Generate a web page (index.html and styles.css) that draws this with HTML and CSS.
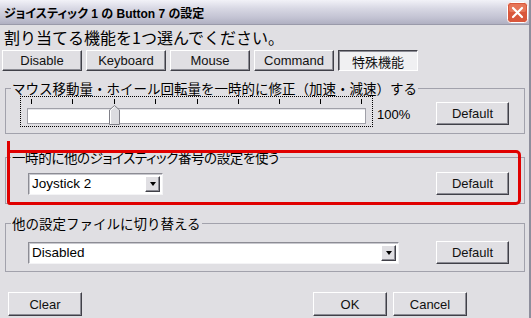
FILE: index.html
```html
<!DOCTYPE html>
<html lang="ja">
<head>
  <meta charset="UTF-8" />
  <title>ジョイスティック 1 の Button 7 の設定</title>
  <link rel="stylesheet" href="styles.css">
</head>
<body>
  <div class="window">
    <div class="titlebar">
      <span class="title">ジョイスティック 1 の Button 7 の設定</span>
      <span class="close">
        <svg viewBox="0 0 21 21" width="21" height="21">
          <rect x="0.5" y="0.5" width="20" height="20" rx="3" fill="#d9573c" stroke="#fff" />
          <rect x="2" y="2" width="17" height="8" rx="2" fill="#ee8a6e" opacity="0.6" />
          <path d="M6 6l9 9M15 6l-9 9" stroke="#fff" stroke-width="2.2" stroke-linecap="round" />
        </svg>
      </span>
    </div>
    <div class="content">
      <div class="heading">割り当てる機能を1つ選んでください。</div>
      <div class="tabs">
        <button class="btn tab">Disable</button>
        <button class="btn tab">Keyboard</button>
        <button class="btn tab">Mouse</button>
        <button class="btn tab">Command</button>
        <button class="btn tab pressed">特殊機能</button>
      </div>

      <fieldset class="group g-speed">
        <legend>マウス移動量・ホイール回転量を一時的に修正（加速・減速）する</legend>
        <div class="row">
          <div class="slider">
            <svg viewBox="0 0 351 29" width="351" height="29">
              <g stroke="#000" stroke-width="1">
                <line x1="10.5" y1="2" x2="10.5" y2="7" />
                <line x1="51.5" y1="2" x2="51.5" y2="7" />
                <line x1="93.5" y1="2" x2="93.5" y2="7" />
                <line x1="134.5" y1="2" x2="134.5" y2="7" />
                <line x1="176.5" y1="2" x2="176.5" y2="7" />
                <line x1="217.5" y1="2" x2="217.5" y2="7" />
                <line x1="258.5" y1="2" x2="258.5" y2="7" />
                <line x1="299.5" y1="2" x2="299.5" y2="7" />
                <line x1="340.5" y1="2" x2="340.5" y2="7" />
              </g>
              <rect x="6.5" y="11.5" width="338" height="15" fill="#fff" stroke="#a0a0a8" />
              <line x1="7" y1="12.5" x2="344" y2="12.5" stroke="#e4e4e8" />
              <polygon points="88.5,27.5 88.5,13 93.5,8.5 98.5,13 98.5,27.5" fill="#dcdce0" stroke="#808088" />
              <polyline points="89.5,27 89.5,13.4 93.5,9.8" fill="none" stroke="#fff" />
            </svg>
          </div>
          <span class="pct">100%</span>
          <button class="btn default">Default</button>
        </div>
      </fieldset>

      <div class="mark-wrap">
        <fieldset class="group g-joy">
          <legend>一時的に他のジョイスティック番号の設定を使う</legend>
          <div class="row">
            <div class="combo short">
              <span class="combo-text">Joystick 2</span>
              <span class="combo-arrow"><span class="tri"></span></span>
            </div>
            <button class="btn default">Default</button>
          </div>
        </fieldset>
        <div class="mark"></div>
      </div>

      <fieldset class="group g-file">
        <legend>他の設定ファイルに切り替える</legend>
        <div class="row">
          <div class="combo long">
            <span class="combo-text">Disabled</span>
            <span class="combo-arrow"><span class="tri"></span></span>
          </div>
          <button class="btn default">Default</button>
        </div>
      </fieldset>

      <div class="footer">
        <button class="btn foot">Clear</button>
        <button class="btn foot ok">OK</button>
        <button class="btn foot">Cancel</button>
      </div>
    </div>
  </div>
</body>
</html>
```

FILE: styles.css
```css
body {
  margin: 0;
  background-color: #e0dfe3;
  color: #000;
  font-family: "Liberation Sans", "Noto Sans CJK JP", sans-serif;
  font-size: 13px;
}
.window {
  width: 529px;
  height: 318px;
  border-right: 2px solid #8e8e9c;
  overflow: hidden;
}

/* title bar */
.titlebar {
  height: 24px;
  display: flex;
  align-items: center;
  justify-content: space-between;
  padding: 0 1px 0 4px;
  background: linear-gradient(#f2f2f8, #d8d8e4 35%, #c2c2d2 75%, #b0b0c2);
  border-bottom: 1px solid #9a9aaa;
}
.title {
  font-weight: bold;
  font-size: 12px;
  font-feature-settings: "palt";
}
.close {
  display: flex;
  width: 21px;
  height: 21px;
}

.content {
  padding: 0 4px 0 5px;
}
.heading {
  height: 24px;
  line-height: 24px;
  margin-left: -1px;
  font-size: 16px;
  font-family: "Noto Sans CJK JP", sans-serif;
}

/* classic 3d buttons */
.btn {
  background-color: #e0dfe3;
  border: 1px solid;
  border-color: #fff #404048 #404048 #fff;
  box-shadow: inset -1px -1px 0 #8c8c94;
  font-family: "Liberation Sans", "Noto Sans CJK JP", sans-serif;
  font-size: 13px;
  font-weight: normal;
  color: #111;
  padding: 0;
  margin: 0;
}
.tabs {
  display: flex;
  gap: 4px;
  margin-left: -3px;
  margin-top: 1px;
}
.tab {
  width: 80px;
  height: 21px;
}
.tab.pressed {
  border-color: #404048 #fff #fff #404048;
  box-shadow: inset 1px 1px 0 #8c8c94;
  background-color: #f0f0f2;
  padding-top: 1px;
}

/* groups */
.group {
  margin: 0;
  padding: 0 14px;
  border: 1px solid #a2a2ac;
  min-inline-size: 0;
}
.group legend {
  margin-left: -9px;
  padding: 0 1px;
  line-height: 14px;
  font-size: 13.5px;
  font-family: "Noto Sans CJK JP", sans-serif;
}
.g-joy legend {
  font-feature-settings: "palt";
  letter-spacing: -0.4px;
}
.row {
  display: flex;
  align-items: center;
}
.g-speed {
  margin-top: 10px;
  padding-top: 1px;
  padding-bottom: 6px;
}
.g-speed .row {
  align-items: flex-start;
}
.slider {
  width: 351px;
  height: 29px;
  border: 1px dotted #000;
}
.slider svg {
  display: block;
}
.pct {
  margin-left: 4px;
  margin-top: 12px;
  line-height: 14px;
}
.default {
  width: 73px;
  height: 23px;
  margin-left: auto;
  margin-right: 1px;
}
.g-speed .default {
  margin-top: 6px;
}

.mark-wrap {
  position: relative;
  margin-top: 16px;
}
.g-joy {
  padding-top: 8px;
  padding-bottom: 8px;
}
.g-file {
  margin-top: 12px;
  padding-top: 11px;
  padding-bottom: 7px;
}

/* red annotation */
.mark {
  position: absolute;
  left: 2px;
  top: 0;
  width: 508px;
  height: 49px;
  border: 3px solid #e00000;
  border-radius: 1px 5px 5px 3px;
}
.mark::before {
  content: "";
  position: absolute;
  left: -3px;
  top: -12px;
  width: 3px;
  height: 12px;
  background-color: #e00000;
}

/* combo boxes */
.combo {
  height: 22px;
  box-sizing: border-box;
  display: flex;
  align-items: center;
  background-color: #fff;
  border: 1px solid;
  border-color: #8c8c94 #f4f4f6 #f4f4f6 #8c8c94;
  box-shadow: inset 1px 1px 0 #c8c8ce;
  margin-left: 8px;
}
.combo.short {
  width: 135px;
}
.combo.long {
  width: 371px;
}
.combo-text {
  flex: 1;
  padding-left: 3px;
  line-height: 16px;
  font-size: 13.5px;
}
.combo-arrow {
  width: 15px;
  height: 16px;
  box-sizing: border-box;
  margin-right: 2px;
  display: flex;
  align-items: center;
  justify-content: center;
  background-color: #e0dfe3;
  border: 1px solid;
  border-color: #fff #404048 #404048 #fff;
  box-shadow: inset -1px -1px 0 #8c8c94;
}
.tri {
  width: 0;
  height: 0;
  border-left: 3.5px solid transparent;
  border-right: 3.5px solid transparent;
  border-top: 4px solid #000;
  margin-top: 1px;
}

/* footer */
.footer {
  display: flex;
  margin-top: 20px;
  margin-left: 3px;
  margin-right: 58px;
}
.foot {
  width: 74px;
  height: 24px;
}
.foot.ok {
  margin-left: auto;
  margin-right: 6px;
}
```
